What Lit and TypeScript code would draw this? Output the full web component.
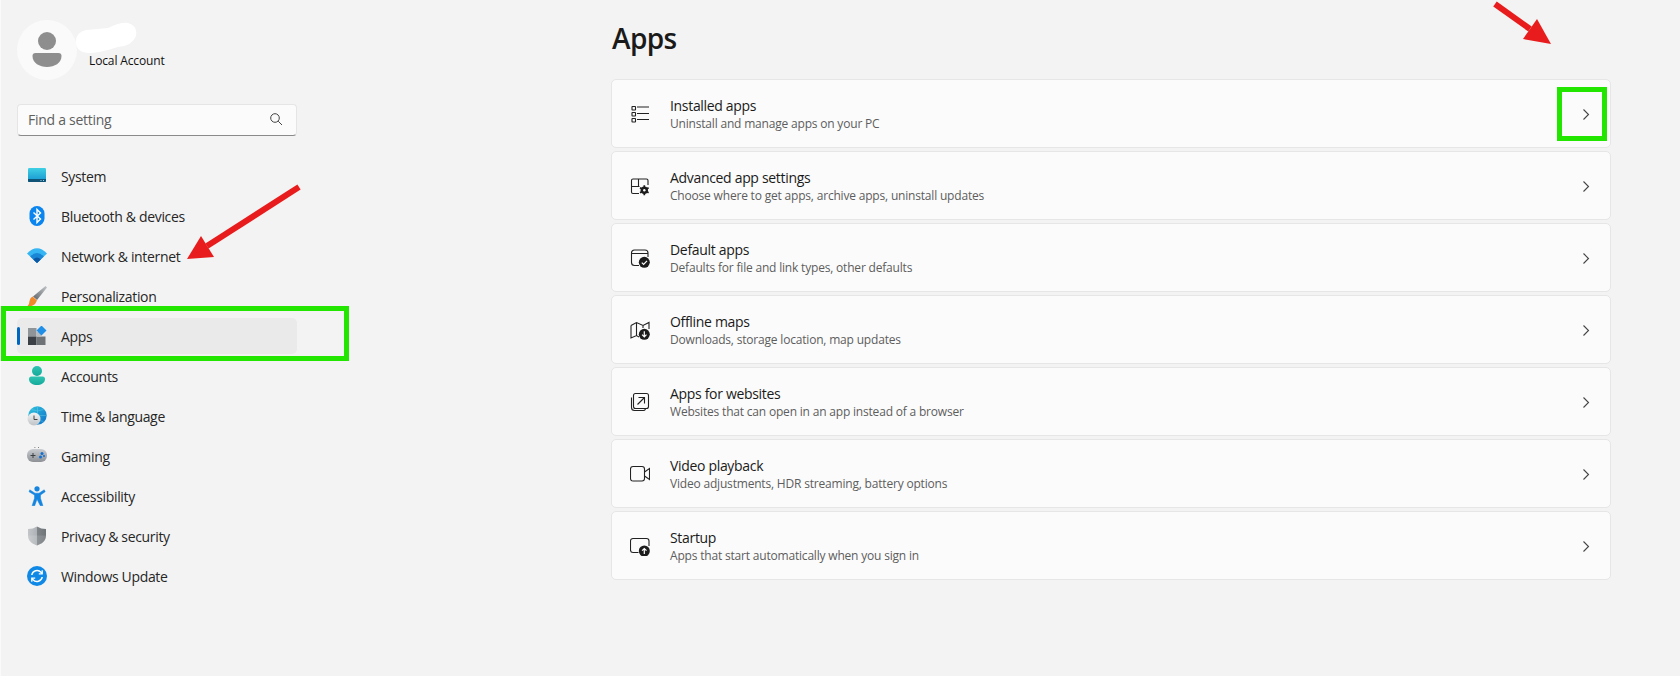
import { LitElement, html, css, svg } from "lit";
import { customElement } from "lit/decorators.js";

const navIcons: Record<string, unknown> = {
  system: svg`<defs><linearGradient id="sys" x1="0" y1="0" x2="0" y2="1"><stop offset="0" stop-color="#3fd0e4"/><stop offset="1" stop-color="#1593cf"/></linearGradient></defs>
    <rect x="1" y="2" width="18" height="14" rx="1.2" fill="url(#sys)"/><path d="M1 13h18v2a1 1 0 0 1-1 1H2a1 1 0 0 1-1-1z" fill="#0f5476"/><path d="M13.500 14.500h1M16 14.500h1" stroke="#9fd3e8" stroke-width="1"/>`,
  bluetooth: svg`<rect x="2.500" y="0" width="15" height="20" rx="7.500" fill="#0a84ee"/><path d="M6.500 6.500l7 6.500-3.500 3.500V3.500l3.500 3.500-7 6.500" fill="none" stroke="#fff" stroke-width="1.400"/>`,
  wifi: svg`<path d="M0 7.500Q10 -3 20 7.500L10 17z" fill="#35b5f2"/><path d="M3.200 10.500Q10 3.500 16.800 10.500L10 17z" fill="#1a86d6"/><path d="M6.300 13.500Q10 9.500 13.700 13.500L10 17z" fill="#0b57a4"/>`,
  brush: svg`<defs><linearGradient id="br" x1="0" y1="1" x2="1" y2="0"><stop offset="0" stop-color="#5f656a"/><stop offset="1" stop-color="#c2c6c9"/></linearGradient></defs>
    <path d="M18.500 0L20 1.500 10 14 6 10.500z" fill="url(#br)"/><path d="M5.500 10.500l4.500 4-2 3.500Q4 21 0 20.500 2.500 18.500 2.500 15 3 11.500 5.500 10.500z" fill="#f0892a"/>`,
  apps: svg`<rect x="1" y="2" width="8.500" height="8.500" fill="#8f9498"/><rect x="1" y="10.500" width="8.500" height="8.500" fill="#3b3f46"/><rect x="9.500" y="10.500" width="9" height="8.500" fill="#6e7377"/><rect x="9.500" y="6" width="5" height="4.500" fill="#b8bbbe"/><path d="M14.500 -0.500L19.500 4.500 14.500 9.500 9.500 4.500z" fill="#1f8fe8"/>`,
  account: svg`<defs><linearGradient id="ac" x1="0" y1="0" x2="0" y2="1"><stop offset="0" stop-color="#2fc4b2"/><stop offset="1" stop-color="#14a99a"/></linearGradient></defs>
    <circle cx="10" cy="5" r="5" fill="url(#ac)"/><path d="M2 13a2.500 2.500 0 0 1 2.500-2.500h11A2.500 2.500 0 0 1 18 13c0 4-4 6-8 6s-8-2-8-6z" fill="url(#ac)"/>`,
  time: svg`<defs><linearGradient id="gl" x1="0" y1="0" x2="1" y2="1"><stop offset="0" stop-color="#31c6df"/><stop offset="1" stop-color="#0d6fc9"/></linearGradient><linearGradient id="ck" x1="0" y1="0" x2="0" y2="1"><stop offset="0" stop-color="#f4f4f4"/><stop offset="1" stop-color="#bfc3c7"/></linearGradient></defs>
    <circle cx="10.500" cy="9.500" r="9.200" fill="url(#gl)"/><path d="M10.500 .5v18M1.500 9.500h18M4.500 3.500q6 3 12 0M4.500 15.500q6-3 12 0" fill="none" stroke="#7fdcef" stroke-width=".5" opacity=".7"/><circle cx="7" cy="13" r="6.500" fill="url(#ck)"/><path d="M7 9.500V13.500H10.500" fill="none" stroke="#444" stroke-width="1"/>`,
  gaming: svg`<defs><linearGradient id="gp" x1="0" y1="0" x2="0" y2="1"><stop offset="0" stop-color="#c9ccd0"/><stop offset="1" stop-color="#8d9196"/></linearGradient></defs>
    <rect x="0" y="3" width="20" height="13" rx="6" fill="url(#gp)"/><path d="M3.500 9.500h5M6 7v5" stroke="#3d4044" stroke-width="1"/><circle cx="15" cy="7.500" r="1.500" fill="#1170d0"/><circle cx="13.500" cy="11" r="1.500" fill="#1170d0"/><circle cx="17" cy="10" r="1" fill="#1170d0"/><path d="M7.500 1.500h.8M11 1.500h.8" stroke="#666" stroke-width="1"/>`,
  access: svg`<circle cx="10" cy="2.800" r="2.600" fill="#1585e0"/><path d="M2.800 3.800 8 7.200h4l5.200-3.400 1 1.900-4.700 3.300v3.300l2.400 7.400h-2.600L10 13.200 7.700 19.700H5.100l2.400-7.400V9L2 5.700z" fill="#1585e0" stroke="#1585e0" stroke-width=".5"/>`,
  shield: svg`<defs><linearGradient id="sh" x1="0" y1="0" x2="1" y2="0"><stop offset="0" stop-color="#c3c6c9"/><stop offset=".5" stop-color="#aeb2b6"/><stop offset=".5" stop-color="#80858a"/><stop offset="1" stop-color="#6f7479"/></linearGradient></defs>
    <path d="M10 .500Q14 3 19 3v6.500C19 15 14.500 18 10 19.500 5.500 18 1 15 1 9.500V3Q6 3 10 .500z" fill="url(#sh)"/><path d="M1 9.500H19C19 15 14.500 18 10 19.500 5.500 18 1 15 1 9.500z" fill="#fff" opacity=".12"/>`,
  update: svg`<circle cx="10" cy="10" r="10" fill="#0f88e6"/><path d="M4.800 9A5.300 5.300 0 0 1 14 6.300L15.200 7.600" fill="none" stroke="#fff" stroke-width="1.500"/><path d="M15.200 4.300v3.500h-3.400" fill="none" stroke="#fff" stroke-width="1.300"/><path d="M15.200 11A5.300 5.300 0 0 1 6 13.700L4.800 12.400" fill="none" stroke="#fff" stroke-width="1.500"/><path d="M4.800 15.700v-3.500h3.400" fill="none" stroke="#fff" stroke-width="1.300"/>`,
};

const nav = [
  ["System", "system"],
  ["Bluetooth & devices", "bluetooth"],
  ["Network & internet", "wifi"],
  ["Personalization", "brush"],
  ["Apps", "apps"],
  ["Accounts", "account"],
  ["Time & language", "time"],
  ["Gaming", "gaming"],
  ["Accessibility", "access"],
  ["Privacy & security", "shield"],
  ["Windows Update", "update"],
];

const rowIcons: Record<string, unknown> = {
  installed: svg`<g fill="none" stroke="#222" stroke-width="1.100"><rect x="2" y="2.500" width="3.500" height="3.500" rx=".4"/><rect x="2" y="8.500" width="3.500" height="3.500" rx=".4"/><rect x="2" y="14.500" width="3.500" height="3.500" rx=".4"/><path d="M7 3H19M7 9.500H19M7 15.500H19"/></g>`,
  advanced: svg`<path d="M9 17.500H3A1.500 1.500 0 0 1 1.500 16V4.500A1.500 1.500 0 0 1 3 3H16.500A1.500 1.500 0 0 1 18 4.500V9M1.500 10.500H9.500M8.500 3V10.500" fill="none" stroke="#222" stroke-width="1.100"/><circle cx="14.300" cy="14.300" r="3.700" fill="#1c1c1c"/><path d="M14.300 9.300v10M10 11.800l8.600 5M10 16.800l8.600-5" stroke="#1c1c1c" stroke-width="1.700"/><circle cx="14.300" cy="14.300" r="1.200" fill="#fbfbfb"/>`,
  defaults: svg`<path d="M9 17.500H4.500A3 3 0 0 1 1.500 14.500V5A3 3 0 0 1 4.500 2H15A3 3 0 0 1 18 5V9M1.500 5.500H18" fill="none" stroke="#222" stroke-width="1.100"/><circle cx="14.300" cy="14.300" r="5.500" fill="#1c1c1c"/><path d="M11.800 14.600l1.800 1.800 3.400-3.600" fill="none" stroke="#fff" stroke-width="1.200"/>`,
  maps: svg`<path d="M1 5.500 6.500 2.500 13 5.500 19 2.500V9M1 5.500V18L6.500 15.500 9 17M6.500 2.500V15.500M13 5.500V8" fill="none" stroke="#222" stroke-width="1.100"/><circle cx="14.300" cy="14.300" r="5.500" fill="#1c1c1c"/><path d="M14.300 11.300V16.800M12.100 14.600l2.200 2.200 2.200-2.200" fill="none" stroke="#fff" stroke-width="1.200"/>`,
  websites: svg`<path d="M1.500 5.500V15.500A3 3 0 0 0 4.500 18.500H13A2.500 2.500 0 0 0 15.500 17" fill="none" stroke="#222" stroke-width="1.100"/><rect x="3.500" y="1.500" width="15" height="15" rx="2" fill="#fbfbfb" stroke="#222" stroke-width="1.100"/><path d="M7.500 12.500L14 6M8.500 5.500H14.500V11.500" fill="none" stroke="#222" stroke-width="1.100"/>`,
  video: svg`<rect x=".5" y="2.500" width="14" height="14.500" rx="2.500" fill="none" stroke="#222" stroke-width="1.100"/><path d="M14.500 8 19.500 4.500V15.500L14.500 12" fill="none" stroke="#222" stroke-width="1.100"/>`,
  startup: svg`<path d="M8.500 16.500H3A2.500 2.500 0 0 1 .5 14V5A2.500 2.500 0 0 1 3 2.500H16.500A2.500 2.500 0 0 1 19 5V10" fill="none" stroke="#222" stroke-width="1.100"/><circle cx="14.300" cy="15" r="5.500" fill="#1c1c1c"/><path d="M14.300 18V12.500M12.100 14.700l2.200-2.200 2.200 2.200" fill="none" stroke="#fff" stroke-width="1.200"/>`,
};

const rows = [
  ["Installed apps", "Uninstall and manage apps on your PC", "installed"],
  ["Advanced app settings", "Choose where to get apps, archive apps, uninstall updates", "advanced"],
  ["Default apps", "Defaults for file and link types, other defaults", "defaults"],
  ["Offline maps", "Downloads, storage location, map updates", "maps"],
  ["Apps for websites", "Websites that can open in an app instead of a browser", "websites"],
  ["Video playback", "Video adjustments, HDR streaming, battery options", "video"],
  ["Startup", "Apps that start automatically when you sign in", "startup"],
];

@customElement("app-root")
export class AppRoot extends LitElement {
  static styles = css`
    :host {
      display: block;
      width: 100%;
      min-height: 676px;
      background: #f3f3f3;
      font-family: "Open Sans", "Noto Sans", sans-serif;
      color: #1a1a1a;
    }
    * { box-sizing: border-box; }
    .app {
      position: relative;
      display: grid;
      grid-template-columns: 610px 1000px;
      height: 676px;
      overflow: hidden;
      border-left: 1px solid #fafafa;
    }
    .sidebar {
      display: flex;
      flex-direction: column;
      padding: 20px 0 0 16px;
    }
    .profile {
      position: relative;
      display: flex;
      height: 60px;
    }
    .avatar { width: 60px; height: 60px; flex: none; display: block; }
    .account {
      font-size: 12px;
      line-height: 16px;
      color: #111;
      margin: 33px 0 0 12px;
      letter-spacing: -0.13px;
    }
    .blob {
      position: absolute;
      left: 59px;
      top: 2px;
      width: 61px;
      height: 32px;
      display: block;
    }
    .search {
      display: flex;
      align-items: center;
      justify-content: space-between;
      width: 280px;
      height: 32px;
      margin-top: 24px;
      padding: 0 13px 2px 10px;
      background: #fbfbfb;
      border: 1px solid #e5e5e5;
      border-bottom-color: #8a8a8a;
      border-radius: 4px;
      font-size: 14px;
      color: #5f5f5f;
      letter-spacing: -0.27px;
    }
    .search svg { width: 14px; height: 14px; display: block; }
    .nav {
      display: flex;
      flex-direction: column;
      gap: 4px;
      margin-top: 22px;
      width: 280px;
    }
    .item {
      position: relative;
      display: flex;
      align-items: center;
      gap: 14px;
      height: 36px;
      padding-left: 10px;
      border-radius: 5px;
      font-size: 14px;
      color: #262626;
      letter-spacing: -0.33px;
    }
    .item svg { width: 20px; height: 20px; flex: none; display: block; }
    .item.active { background: #eaeaea; }
    .item.active::before {
      content: "";
      position: absolute;
      left: 0;
      top: 9px;
      width: 3px;
      height: 18px;
      border-radius: 2px;
      background: #0067c0;
    }
    .main { display: flex; flex-direction: column; }
    h1 {
      margin: 18px 0 0 1px;
      height: 40px;
      font-size: 28px;
      line-height: 40px;
      font-weight: 600;
      color: #1a1a1a;
      letter-spacing: -0.6px;
    }
    .cards {
      display: flex;
      flex-direction: column;
      gap: 3px;
      margin-top: 21px;
    }
    .card {
      display: flex;
      align-items: center;
      height: 69px;
      padding: 0 16px 0 18px;
      background: #fbfbfb;
      border: 1px solid #e6e6e6;
      border-radius: 5px;
    }
    .card > svg.ic { width: 20px; height: 20px; flex: none; display: block; margin-top: 1px; }
    .text { flex: 1; margin-left: 20px; display: flex; flex-direction: column; margin-top: 1px; }
    .title { font-size: 14px; line-height: 20px; color: #1a1a1a; letter-spacing: -0.32px; }
    .sub { font-size: 12px; line-height: 16px; color: #5d5d5d; letter-spacing: -0.19px; }
    .chev { width: 8px; height: 13px; flex: none; display: block; margin: 1px 4px 0 0; }
    .overlay { position: absolute; left: -1px; top: 0; width: 1680px; height: 676px; pointer-events: none; }
  `;

  render() {
    return html`<div class="app">
      <aside class="sidebar">
        <div class="profile">
          <svg class="avatar" viewBox="0 0 60 60">
            <circle cx="30" cy="30" r="30" fill="#fafafa" />
            <circle cx="30" cy="21" r="9" fill="#8e8e8e" />
            <path d="M15.500 36a3 3 0 0 1 3-3h23a3 3 0 0 1 3 3c0 7-7 11-14.500 11S15.500 43 15.500 36z" fill="#8e8e8e" />
          </svg>
          <span class="account">Local Account</span>
          <svg class="blob" viewBox="0 0 61 32">
            <path d="M10 8 Q22 7 32 6 Q44 0 52 1 Q62 4 60 14 Q56 24 42 25 Q24 31 12 31 Q0 30 0 20 Q0 10 10 8z" fill="#fff" />
          </svg>
        </div>
        <div class="search">
          <span>Find a setting</span>
          <svg viewBox="0 0 14 14"><circle cx="6" cy="6" r="4.300" fill="none" stroke="#444" stroke-width="1" /><path d="M9.200 9.200L13 13" stroke="#444" stroke-width="1" /></svg>
        </div>
        <nav class="nav">
          ${nav.map(
            ([label, icon]) => html`<div class="item ${label === "Apps" ? "active" : ""}">
              <svg viewBox="0 0 20 20">${navIcons[icon]}</svg><span>${label}</span>
            </div>`
          )}
        </nav>
      </aside>
      <main class="main">
        <h1>Apps</h1>
        <div class="cards">
          ${rows.map(
            ([title, sub, icon]) => html`<div class="card">
              <svg class="ic" viewBox="0 0 20 20">${rowIcons[icon]}</svg>
              <div class="text"><span class="title">${title}</span><span class="sub">${sub}</span></div>
              <svg class="chev" viewBox="0 0 8 13"><path d="M1.500 1.500L6.500 6.500 1.500 11.500" fill="none" stroke="#444" stroke-width="1.100" /></svg>
            </div>`
          )}
        </div>
      </main>
      <svg class="overlay" viewBox="0 0 1680 676">
        <rect x="3.500" y="308.500" width="343" height="50" fill="none" stroke="#22e600" stroke-width="5" />
        <rect x="1559.500" y="89.500" width="45" height="49" fill="none" stroke="#22e600" stroke-width="5" />
        <path d="M299 187 L207 246" stroke="#e81c1c" stroke-width="6" />
        <path d="M187 259 L201 236 L214 257z" fill="#e81c1c" />
        <path d="M1495 4 L1530 29" stroke="#e81c1c" stroke-width="6" />
        <path d="M1551 44 L1537 19 L1523 39z" fill="#e81c1c" />
      </svg>
    </div>`;
  }
}
